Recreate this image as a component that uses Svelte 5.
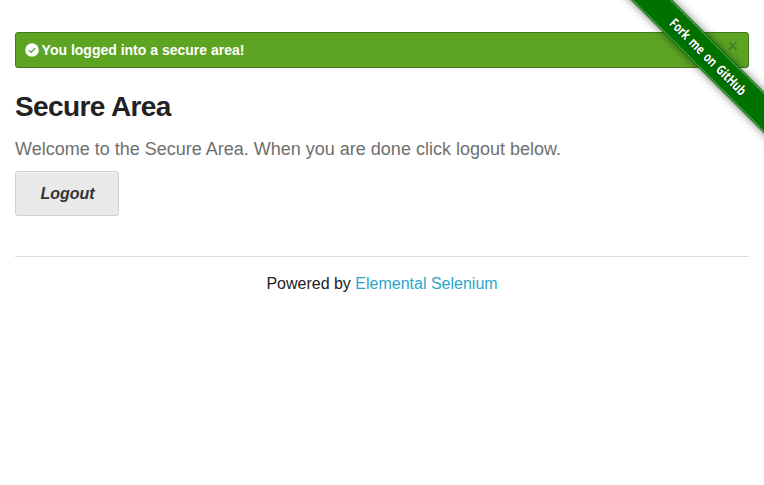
<script>
  const message = 'You logged into a secure area!';
</script>

<main>
  <div class="alert">
    <svg class="check" viewBox="0 0 14 14" aria-hidden="true">
      <circle cx="7" cy="7" r="6.8" fill="#fff" />
      <path d="M3.8 7.1 6.1 9.3 10.3 5.1" fill="none" stroke="#5da423" stroke-width="1.3" />
    </svg>
    <span>{message}</span>
    <button class="close" aria-label="Close">×</button>
  </div>
  <h2>Secure Area</h2>
  <h4>Welcome to the Secure Area. When you are done click logout below.</h4>
  <a class="logout" href="#logout">Logout</a>
  <footer>Powered by <a href="#elemental">Elemental Selenium</a></footer>
</main>

<svg class="ribbon" width="149" height="149" viewBox="0 0 149 149" role="img" aria-label="Fork me on GitHub">
  <g transform="translate(92.5 56) rotate(45)">
    <rect class="band" x="-130" y="-14.6" width="260" height="29.2" fill="#007200" />
    <path d="M-130 -13.2H130M-130 13.2H130" stroke="#76b576" stroke-width="1" stroke-dasharray="1.4 .7" />
    <text x="-50" y="5" textLength="102" lengthAdjust="spacingAndGlyphs">Fork me on GitHub</text>
  </g>
</svg>

<style>
  :global(body) {
    background: #fff;
    font-family: "Liberation Sans", Arial, sans-serif;
    color: #222;
  }
  main { padding: 32px 15px 0; }
  .alert {
    box-sizing: border-box;
    height: 36px;
    display: flex;
    align-items: center;
    padding: 0 10px 0 9px;
    border: 1px solid #457a1a;
    border-radius: 3px;
    background: #5da423;
    color: #fff;
    font-size: 14px;
    font-weight: bold;
    line-height: 16px;
  }
  .check { width: 14px; height: 14px; margin-right: 2.6px; }
  .close {
    margin: -9px 0 0 auto;
    padding: 0;
    border: 0;
    background: none;
    color: #333;
    opacity: .35;
    font: bold 18px/18px "Liberation Sans", Arial, sans-serif;
  }
  h2 {
    margin: 19px 0 0;
    font-size: 28px;
    line-height: 39px;
    letter-spacing: -.6px;
  }
  h4 {
    margin: 10px 0 0;
    font-size: 18px;
    line-height: 27px;
    font-weight: normal;
    color: #6f6f6f;
  }
  .logout {
    box-sizing: border-box;
    display: flex;
    align-items: center;
    justify-content: center;
    width: 104px;
    height: 45px;
    margin-top: 8px;
    padding-left: 1px;
    border: 1px solid #d0d0d0;
    border-radius: 3px;
    background: #e9e9e9;
    box-shadow: inset 0 1px 0 rgba(255, 255, 255, .5);
    color: #333;
    font-size: 16px;
    font-style: italic;
    font-weight: bold;
    text-decoration: none;
  }
  footer {
    margin-top: 40px;
    padding-top: 15px;
    border-top: 1px solid #ddd;
    text-align: center;
    font-size: 16px;
    line-height: 24px;
  }
  footer a { color: #2ba6cb; text-decoration: none; }
  .ribbon { position: absolute; top: 0; right: 0; }
  .band { filter: drop-shadow(0 0 4px rgba(0, 0, 0, .5)); }
  text {
    font: bold 13.5px "Open Sans", "Noto Sans", sans-serif;
    word-spacing: 2px;
    fill: #fff;
    text-shadow: 0 1px 2px rgba(0, 0, 0, .5);
  }
</style>
